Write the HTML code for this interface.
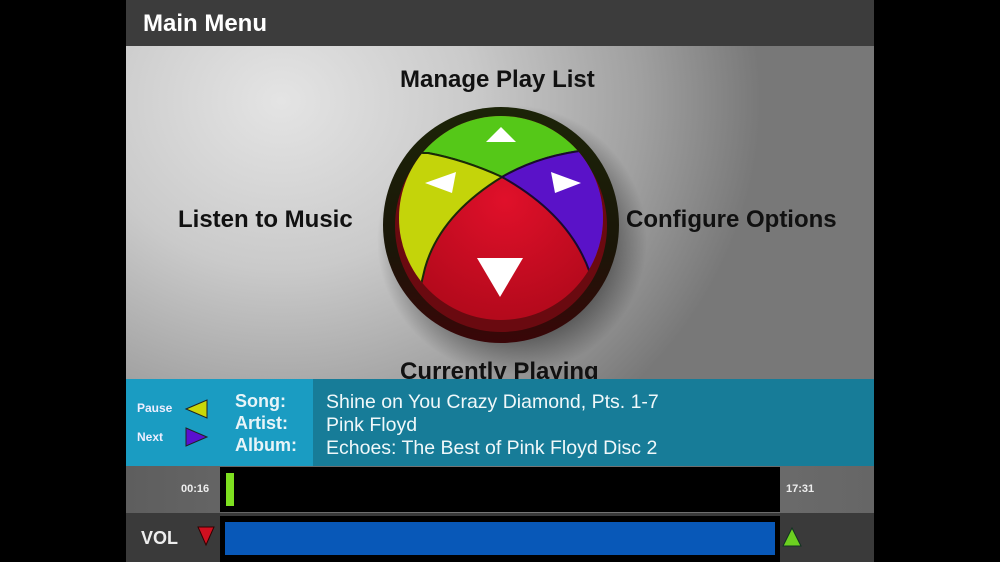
<!DOCTYPE html>
<html><head><meta charset="utf-8"><style>
*{margin:0;padding:0;box-sizing:border-box}
body{width:1000px;height:562px;background:#000;position:relative;overflow:hidden;font-family:"Liberation Sans",Arial,sans-serif}
.abs{position:absolute}
#main{left:126px;top:46px;width:748px;height:333px;background:radial-gradient(ellipse 480px 420px at 155px 55px,#e4e4e4 0%,#cacaca 40%,#a0a0a0 75%,#787878 100%)}
.lbl{position:absolute;font-weight:bold;font-size:24px;color:#111;white-space:nowrap}
</style></head><body>
<div class="abs" style="left:126px;top:0;width:748px;height:46px;background:#3c3c3c"></div>
<div class="abs" style="left:143px;top:10px;color:#fff;font-weight:bold;font-size:24px">Main Menu</div>
<div id="main" class="abs"></div>
<div class="lbl" style="left:400px;top:66px">Manage Play List</div>
<div class="lbl" style="left:178px;top:206px">Listen to Music</div>
<div class="lbl" style="left:626px;top:206px">Configure Options</div>
<div class="lbl" style="left:400px;top:358px">Currently Playing</div>
<svg class="abs" style="left:0;top:0" width="1000" height="562">
<defs>
<radialGradient id="sh" cx="0.5" cy="0.5" r="0.5"><stop offset="0.7" stop-color="#000" stop-opacity="0.45"/><stop offset="1" stop-color="#000" stop-opacity="0"/></radialGradient>
<linearGradient id="rim" x1="0" y1="0" x2="0" y2="1"><stop offset="0" stop-color="#1c2408"/><stop offset="0.6" stop-color="#1a1608"/><stop offset="1" stop-color="#3a0608"/></linearGradient>
<clipPath id="ic"><circle cx="501" cy="218" r="102"/></clipPath>
<radialGradient id="rd" cx="0.5" cy="0.4" r="0.6"><stop offset="0" stop-color="#e0102a"/><stop offset="1" stop-color="#a80818"/></radialGradient>
</defs>
<circle cx="512" cy="240" r="135" fill="url(#sh)"/>
<circle cx="501" cy="225" r="118" fill="url(#rim)"/>
<circle cx="501" cy="226" r="106" fill="#6a0a10"/>
<g clip-path="url(#ic)">
<rect x="380" y="100" width="250" height="250" fill="url(#rd)"/>
<path d="M380 100 L630 100 L630 150 L588 150 Q540 155 502 177 Q465 160 428 153 L380 153 Z" fill="#55c818" stroke="#1a2a08" stroke-width="2"/>
<path d="M370 153 L428 153 Q465 160 502 177 Q440 215 425 268 L415 310 L370 310 Z" fill="#c4d40a" stroke="#1a2a08" stroke-width="2"/>
<path d="M640 150 L588 150 Q540 155 502 177 Q570 215 590 273 L600 310 L640 310 Z" fill="#5a12c8" stroke="#1a0a30" stroke-width="2"/>
</g>
<polygon points="486,142 516,142 501,127" fill="#fff"/>
<polygon points="425,183 456,172 452,193" fill="#fff"/>
<polygon points="551,172 581,183 555,193" fill="#fff"/>
<polygon points="477,258 523,258 500,297" fill="#fff"/>
</svg>
<div class="abs" style="left:126px;top:379px;width:187px;height:87px;background:#1a9cc2"></div>
<div class="abs" style="left:313px;top:379px;width:561px;height:87px;background:#177c98"></div>
<div class="abs" style="left:137px;top:401px;color:#eef;font-weight:bold;font-size:12px">Pause</div>
<div class="abs" style="left:137px;top:430px;color:#eef;font-weight:bold;font-size:12px">Next</div>
<svg class="abs" style="left:184px;top:398px" width="26" height="50"><polygon points="2,11 23,2 23,20" fill="#c8d808" stroke="#222" stroke-width="1"/><polygon points="2,30 23,39 2,48" fill="#5a10d0" stroke="#222" stroke-width="1"/></svg>
<div class="abs" style="left:235px;top:390px;color:#e8f4f8;font-weight:bold;font-size:18px;line-height:22px">Song:<br>Artist:<br>Album:</div>
<div class="abs" style="left:326px;top:391px;color:#f0f8fa;font-size:19.5px;line-height:23px">Shine on You Crazy Diamond, Pts. 1-7<br>Pink Floyd<br>Echoes: The Best of Pink Floyd Disc 2</div>
<div class="abs" style="left:126px;top:466px;width:748px;height:47px;background:linear-gradient(90deg,#5e5e5e,#777 50%,#666)"></div>
<div class="abs" style="left:220px;top:467px;width:560px;height:45px;background:#000"></div>
<div class="abs" style="left:226px;top:473px;width:8px;height:33px;background:#7ee020"></div>
<div class="abs" style="left:181px;top:483px;color:#eee;font-weight:bold;font-size:11px">00:16</div>
<div class="abs" style="left:786px;top:483px;color:#eee;font-weight:bold;font-size:11px">17:31</div>
<div class="abs" style="left:126px;top:513px;width:748px;height:49px;background:#3a3a3a"></div>
<div class="abs" style="left:220px;top:516px;width:560px;height:46px;background:#000"></div>
<div class="abs" style="left:225px;top:522px;width:550px;height:33px;background:#0858b8"></div>
<div class="abs" style="left:141px;top:528px;color:#eee;font-weight:bold;font-size:18px">VOL</div>
<svg class="abs" style="left:196px;top:525px" width="20" height="24"><polygon points="2,2 18,2 10,20" fill="#d01020" stroke="#300" stroke-width="1"/></svg>
<svg class="abs" style="left:781px;top:525px" width="22" height="24"><polygon points="2,21 20,21 11,3" fill="#6cd020" stroke="#132" stroke-width="1"/></svg>
</body></html>
